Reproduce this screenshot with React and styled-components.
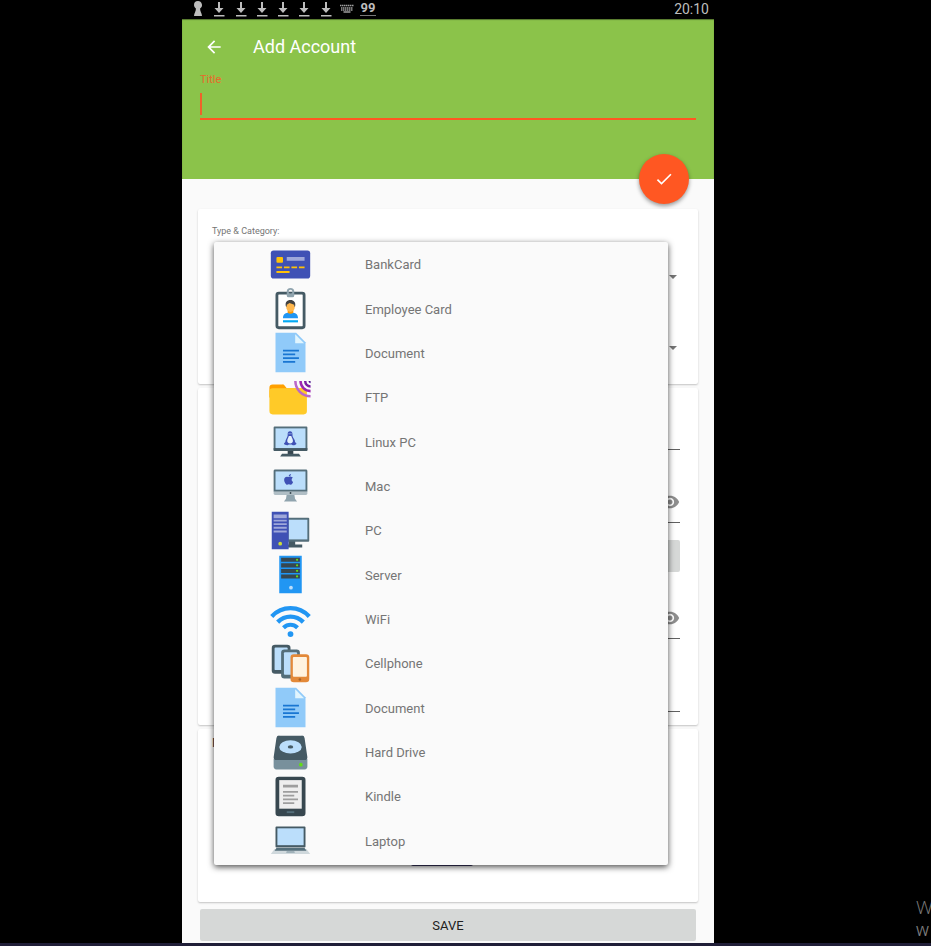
import styled, { createGlobalStyle } from "styled-components"
import { MdArrowBack, MdCheck, MdVisibility } from "react-icons/md";
import { FaApple } from "react-icons/fa";
import { useState } from "react";

const GlobalStyle = createGlobalStyle`
    * {
        box-sizing: border-box;
    }

    body {
        margin: 0;
        background-color: black;
        font-family: Roboto, "Liberation Sans", sans-serif;
    }

    button, input, select {
        font-family: inherit;
        border: none;
        border-radius: 0;
        outline: none;
        padding: 0;
        margin: 0;
    }
`

const Page = styled.div`
    min-height: 100vh;
    display: flex;
    flex-direction: column;
    overflow: hidden;
`

const Desktop = styled.div`
    flex: 1;
    display: grid;
    grid-template-columns: 182fr 532fr 217fr;
`

const Side = styled.aside`
    min-width: 0;
    display: flex;
    flex-direction: column;
    align-items: flex-end;
    justify-content: flex-end;
    padding-bottom: 3px;
`

const Watermark = styled.div`
    width: 15px;
    white-space: nowrap;
    font-family: "Open Sans", sans-serif;
    color: #7c7c7c;

    p {
        margin: 0;
        font-size: 19px;
        font-weight: 300;
        line-height: 27px;
    }

    small {
        display: block;
        font-size: 14px;
        line-height: 19px;
    }
`

const Taskbar = styled.div`
    height: 3px;
    background-color: #201e38;
`

const Phone = styled.main`
    min-width: 0;
    background-color: #fafafa;
`

const StatusBar = styled.div`
    height: 19px;
    padding: 0 5px 2px 8px;
    display: flex;
    align-items: center;
    justify-content: space-between;
    background-color: black;
    color: #bdbdbd;
    font-size: 14px;
    line-height: 16px;
`

const StatusIcons = styled.div`
    display: flex;
    align-items: center;
    justify-content: space-between;
    width: 186px;

    svg {
        width: 16px;
        height: 16px;
    }
`

const Badge = styled.span`
    width: 16px;
    text-align: center;
    font-weight: bold;
    font-size: 13px;
    line-height: 14px;
    border-bottom: 1px solid #777;
`

const Header = styled.header`
    position: relative;
    background-color: #8bc34a;
    padding: 0 18px 59px;
    box-shadow: inset 0 1px 1px rgba(0, 0, 0, 0.4);
`

const AppBar = styled.div`
    height: 54px;
    display: flex;
    align-items: center;
    gap: 29px;
    padding-top: 1px;
    color: white;
`

const BackButton = styled.button`
    width: 24px;
    height: 24px;
    margin-left: 2px;
    margin-right: -2px;
    background: none;
    color: white;
    font-size: 20px;
    display: flex;
    align-items: center;
    cursor: pointer;
    justify-content: center;
`

const Heading = styled.h1`
    margin: 0;
    font-size: 18px;
    line-height: 24px;
    font-weight: 400;
`

const TitleLabel = styled.label`
    display: block;
    font-size: 11px;
    line-height: 14px;
    color: #e8692b;
`

const TitleRow = styled.div`
    display: flex;
    margin-top: 6px;
    padding-bottom: 3px;
    border-bottom: 2px solid #ff5722;
`

const Caret = styled.span`
    width: 2px;
    height: 22px;
    background-color: #f0622a;
`

const TitleInput = styled.input`
    flex: 1;
    min-width: 0;
    height: 22px;
    background: none;
    font-size: 16px;
    color: white;
`

const Fab = styled.button`
    position: absolute;
    right: 25px;
    bottom: -25px;
    width: 50px;
    height: 50px;
    border-radius: 50%;
    display: flex;
    align-items: center;
    justify-content: center;
    background-color: #ff5722;
    color: white;
    font-size: 20px;
    box-shadow: 0 2px 4px rgba(0, 0, 0, 0.4);
    cursor: pointer;
`

const Form = styled.form`
    padding: 30px 16px 2px;
    display: flex;
    flex-direction: column;
    gap: 4px;
`

const Card = styled.section`
    position: relative;
    padding: 14px 18px 13px;
    border-radius: 2px;
    background-color: white;
    box-shadow: 0 1px 2px rgba(0, 0, 0, 0.22);
`

const TypeCard = styled(Card)`
    padding: 15px 14px 12px;
`

const NotesCard = styled(Card)`
    padding: 7px 26px 36px 14px;
`

const CardLabel = styled.div`
    font-size: 9px;
    line-height: 14px;
    color: #757575;
`

const NotesLabel = styled.div`
    font-size: 13px;
    line-height: 14px;
    color: #424242;
`

const SelectRow = styled.div`
    height: 48px;
    margin-top: ${props => props.$first ? 15 : 23}px;
    padding-right: 7px;
    display: flex;
    align-items: center;

    svg {
        width: 8px;
        height: 4px;
    }
`

const Select = styled.select`
    flex: 1;
    min-width: 0;
    height: 48px;
    appearance: none;
    background: none;
`

const Field = styled.div`
    height: 48px;
    margin-top: ${props => props.$gap || 0}px;
    padding-top: 6px;
    display: flex;
    align-items: center;
    border-bottom: 1px solid #616161;
`

const FieldInput = styled.input`
    flex: 1;
    min-width: 0;
    height: 32px;
    background: none;
`

const EyeButton = styled.button`
    width: 20px;
    height: 20px;
    background: none;
    color: #8e8e8e;
    font-size: 20px;
    display: flex;
`

const GreyButton = styled.button`
    height: 32px;
    border-radius: 2px;
    background-color: #d6d8d7;
    color: #212121;
    font-size: 13px;
    cursor: pointer;
`

const GenerateButton = styled(GreyButton)`
    display: block;
    width: 100%;
    margin: 17px 0 19px;
`

const SaveButton = styled(GreyButton)`
    margin: 3px 2px 0;
`

const ColorButton = styled.button`
    display: block;
    width: 62px;
    height: 32px;
    margin: 84px auto 0;
    border-radius: 2px;
    background-color: #3d3a66;
`

const Menu = styled.ul`
    position: absolute;
    z-index: 2;
    top: 33px;
    left: 16px;
    right: 30px;
    height: 623px;
    margin: 0;
    padding: 0 0 2px;
    list-style: none;
    display: grid;
    grid-template-rows: repeat(14, minmax(0, 1fr));
    border-radius: 2px;
    background-color: #fafafa;
    box-shadow: 0 2px 6px rgba(0, 0, 0, 0.7);
`

const MenuItem = styled.button`
    width: 100%;
    height: 100%;
    padding-left: 54px;
    display: flex;
    align-items: center;
    gap: 52px;
    background: none;
    color: #757575;
    font-size: 13px;
    line-height: 16px;
    text-align: left;
    cursor: pointer;

    > svg {
        flex: none;
        width: 45px;
        height: 45px;
    }
`

const ItemName = styled.span`
    padding-top: 2px;
`

const Icon = ({ children }) => <svg viewBox="0 0 48 48" aria-hidden="true">{children}</svg>

const BankCardIcon = () => (
    <Icon>
        <rect x="3" y="9" width="42" height="30" rx="3" fill="#3F51B5" />
        <rect x="9" y="16" width="7" height="6" rx="1" fill="#FFC107" />
        <rect x="20" y="16" width="19" height="4" fill="#9FA8DA" />
        <path d="M9 26h6v2H9zM17 26h6v2h-6zM25 26h6v2h-6zM33 26h6v2h-6zM9 31h14v2H9z" fill="#FFC107" />
    </Icon>
)

const EmployeeIcon = () => (
    <Icon>
        <rect x="9.5" y="7.5" width="29" height="37" rx="2" fill="white" stroke="#455A64" strokeWidth="3" />
        <path d="M24 2a4 4 0 0 0-4 4v4a2 2 0 0 0 2 2h4a2 2 0 0 0 2-2V6a4 4 0 0 0-4-4zm0 6a2 2 0 1 1 0-4 2 2 0 0 1 0 4z" fill="#90A4AE" />
        <path d="M21 25h6v5l-3 1-3-1z" fill="#FF9800" />
        <ellipse cx="24" cy="22" rx="4.6" ry="5.6" fill="#FFB74D" />
        <path d="M19 21.5c-.8-4 1-6.5 5-6.5 3.5 0 5.8 2.5 5 6.5l-1 .5v-2l-5-1.8-3 1.8v2z" fill="#424242" />
        <path d="M16 34.5c0-4 2-5.5 5-6 1.5 1.500 4.5 1.500 6 0 3 .5 5 2 5 6z" fill="#2196F3" />
        <path d="M16 36.5h16v2.300H16z" fill="#03A9F4" />
    </Icon>
)

const DocumentIcon = () => (
    <Icon>
        <path d="M40 45H8V3h22l10 10z" fill="#90CAF9" />
        <path d="M38.500 14H29V4.500z" fill="#E1F5FE" />
        <path d="M16 21h17v2H16zM16 25h13v2H16zM16 29h17v2H16zM16 33h13v2H16z" fill="#1976D2" />
    </Icon>
)

const FtpIcon = () => (
    <Icon>
        <path d="M38 14H20l-3-3.500a2 2 0 0 0-1.500-.5H5a3.500 3.500 0 0 0-3.500 3.500V24H41z" fill="#FFA000" />
        <rect x="1.500" y="14" width="40" height="28" rx="3.500" fill="#FFCA28" />
        <g fill="none" strokeWidth="2.700">
            <path d="M29.200 6.500A16.200 16.200 0 0 0 45.400 22.700" stroke="#BA68C8" />
            <path d="M34.700 6.500A10.700 10.700 0 0 0 45.400 17.200" stroke="#9C27B0" />
            <path d="M39.700 6.500A5.700 5.700 0 0 0 45.400 12.200" stroke="#7B1FA2" />
        </g>
        <path d="M43.200 6.500a2.200 2.200 0 0 0 2.200 2.200V6.500z" fill="#4A148C" />
    </Icon>
)

const LinuxIcon = () => (
    <Icon>
        <path d="M21 33h6v5h-6z" fill="#37474F" />
        <path d="M15 37h18l2 3H13z" fill="#455A64" />
        <rect x="6" y="8" width="36" height="26" rx="1" fill="#546E7A" />
        <path d="M6 31h36v2a1 1 0 0 1-1 1H7a1 1 0 0 1-1-1z" fill="#455A64" />
        <path d="M8 10h32v21H8z" fill="#BBDEFB" />
        <path d="M23.500 13c-2 0-2.700 1.400-2.500 3.500.2 2-.7 3-1.700 5-.6 1.200-.8 2.300-.8 3l-1.500 1.700c0 1.200 2.500 2 4 1.800l1.200-.8h3l1.200.8c1.500.2 4-.8 4-2l-1.600-1.500c.1-1-.3-2-1-3.200-1.300-2-1.800-3-1.700-4.800.1-2.100-.6-3.500-2.600-3.500z" fill="#3F51B5" />
        <path d="M23.500 18l1.300.1c.5 2 1.900 3.300 1.800 5.300-.1 1.500-1.300 2.600-3 2.600s-3-1.100-3.100-2.600c-.1-2 1.300-3.400 1.700-5.300z" fill="#E3F2FD" />
        <path d="M22 15.200h1v1h-1zM24 15.200h1v1h-1z" fill="#BBDEFB" />
    </Icon>
)

const MacIcon = () => (
    <Icon>
        <path d="M20 33h8l.8 5 2.200 3H17l2.200-3z" fill="#90A4AE" />
        <path d="M6 30h36v2.500a1.500 1.500 0 0 1-1.500 1.500h-33A1.500 1.500 0 0 1 6 32.500z" fill="#B0BEC5" />
        <path d="M7.500 7h33A1.500 1.500 0 0 1 42 8.500V30.500H6V8.500A1.500 1.500 0 0 1 7.500 7z" fill="#546E7A" />
        <path d="M8 9h32v19.500H8z" fill="#BBDEFB" />
        <circle cx="24" cy="32" r="1" fill="#37474F" />
        <FaApple x="15.500" y="11" width="15.500" height="15.500" color="#3F51B5" />
    </Icon>
)

const PcIcon = () => (
    <Icon>
        <path d="M22 35h7v4h7.500v3H20v-3h2z" fill="#455A64" />
        <rect x="18" y="10.500" width="26" height="25.500" rx="1" fill="#546E7A" />
        <path d="M22 12.500h20v21H22z" fill="#BBDEFB" />
        <path d="M4 4h18v40H4z" fill="#3F51B5" />
        <path d="M6 7h14v4H6zM6 12.500h14v2H6zM6 16.200h14v2H6zM6 20h14v2H6zM6 24h14v2H6z" fill="#9FA8DA" />
        <circle cx="13" cy="38" r="2" fill="#CDDC39" />
    </Icon>
)

const ServerIcon = () => (
    <Icon>
        <path d="M12 4h24v40H12z" fill="#2196F3" />
        <path d="M14 6.200h20v4.300H14zM14 12.100h20v4.300H14zM14 18h20v4.300H14zM14 23.900h20v4.300H14z" fill="#37474F" />
        <g fill="#64DD17">
            <circle cx="31" cy="8.300" r="1.200" />
            <circle cx="31" cy="14.200" r="1.200" />
            <circle cx="31" cy="20.100" r="1.200" />
            <circle cx="31" cy="26" r="1.200" />
        </g>
        <circle cx="24.500" cy="38" r="2" fill="#BBDEFB" />
    </Icon>
)

const WifiIcon = () => (
    <Icon>
        <g fill="none" stroke="#2196F3" strokeWidth="4.600">
            <path d="M4 20.800C15 9 33 9 44 20.800" />
            <path d="M10.300 26.800C18 19 30 19 37.700 26.800" />
            <path d="M16.500 32.800C21 28.800 27 28.800 31.500 32.800" />
        </g>
        <circle cx="24" cy="39.500" r="3.100" fill="#2196F3" />
    </Icon>
)

const CellphoneIcon = () => (
    <Icon>
        <rect x="4" y="4" width="20" height="31" rx="3.500" fill="#455A64" />
        <rect x="7" y="7" width="14" height="24" rx="1" fill="#BBDEFB" />
        <rect x="14" y="9" width="20" height="31" rx="3.500" fill="#546E7A" />
        <rect x="17" y="12" width="14" height="24" rx="1" fill="#BBDEFB" />
        <rect x="24" y="14" width="20" height="30" rx="3.500" fill="#E38939" />
        <rect x="26.500" y="17" width="15" height="21" rx="1" fill="#FFF3E0" />
        <circle cx="34" cy="41" r="1.400" fill="#A6642A" />
    </Icon>
)

const HardDriveIcon = () => (
    <Icon>
        <path d="M6 31h36v8a3 3 0 0 1-3 3H9a3 3 0 0 1-3-3z" fill="#78909C" />
        <path d="M12 6h24a3 3 0 0 1 3 2.500L42 29a3 3 0 0 1-3 3H9a3 3 0 0 1-3-3L9 8.500A3 3 0 0 1 12 6z" fill="#455A64" />
        <ellipse cx="24" cy="18" rx="12" ry="7" fill="#BBDEFB" />
        <ellipse cx="24" cy="18" rx="2.900" ry="1.800" fill="#455A64" />
        <circle cx="35" cy="37" r="2" fill="#64DD17" />
    </Icon>
)

const KindleIcon = () => (
    <Icon>
        <rect x="8" y="3" width="32" height="42" rx="3.500" fill="#37474F" />
        <path d="M12 6.500h24V37H12z" fill="#EEEEEE" />
        <path d="M16 11.500h16v3H16zM16 18h16v2H16zM16 22h12v2H16zM16 26h16v2H16zM16 30h12v2H16z" fill="#9E9E9E" />
        <rect x="20" y="39.700" width="8" height="2" fill="#546E7A" />
    </Icon>
)

const LaptopIcon = () => (
    <Icon>
        <path d="M7 33h34l4 5.500H3z" fill="#CFD8DC" />
        <path d="M9 32h30l2 3H7z" fill="#546E7A" />
        <rect x="8" y="9" width="32" height="22.500" rx="1" fill="#455A64" />
        <path d="M10 11h28v18H10z" fill="#BBDEFB" />
        <path d="M20 35.500h8l.7 1.500h-9.400z" fill="#90A4AE" />
    </Icon>
)

const types = [
    { name: "BankCard", icon: BankCardIcon },
    { name: "Employee Card", icon: EmployeeIcon },
    { name: "Document", icon: DocumentIcon },
    { name: "FTP", icon: FtpIcon },
    { name: "Linux PC", icon: LinuxIcon },
    { name: "Mac", icon: MacIcon },
    { name: "PC", icon: PcIcon },
    { name: "Server", icon: ServerIcon },
    { name: "WiFi", icon: WifiIcon },
    { name: "Cellphone", icon: CellphoneIcon },
    { name: "Document", icon: DocumentIcon },
    { name: "Hard Drive", icon: HardDriveIcon },
    { name: "Kindle", icon: KindleIcon },
    { name: "Laptop", icon: LaptopIcon },
]

const DownloadIcon = () => (
    <svg viewBox="0 0 16 16" fill="#bdbdbd" aria-hidden="true">
        <path d="M7 1h2v6h3.500L8 12 3.500 7H7zM3 14h10.500v1.500H3z" />
    </svg>
)

const KeyholeIcon = () => (
    <svg viewBox="0 0 16 16" fill="#bdbdbd" aria-hidden="true">
        <path d="M8 0a4 4 0 0 0-4 4c0 1.500.8 2.700 1.900 3.400C6.200 10 4 12 4 15h8c0-3-2.200-5-1.900-7.600A4 4 0 0 0 8 0z" />
    </svg>
)

const KeyboardIcon = () => (
    <svg viewBox="0 0 16 16" fill="none" stroke="#9e9e9e" strokeWidth="1.500" aria-hidden="true">
        <path d="M1 4.500h14M2 7h12" strokeDasharray="1.500 .5" />
        <path d="M2 9h12" strokeDasharray="1.500 .5" />
        <path d="M4.500 11h7" />
    </svg>
)

const DropArrow = () => (
    <svg viewBox="0 0 8 4" fill="#757575" aria-hidden="true">
        <path d="M0 0h8L4 4z" />
    </svg>
)

function App() {

    const [title, setTitle] = useState("")
    const [open, setOpen] = useState(true)

    return (
        <Page>
            <GlobalStyle />
            <Desktop>
                <Side />

                <Phone>
                    <StatusBar>
                        <StatusIcons>
                            <KeyholeIcon />
                            {[1, 2, 3, 4, 5, 6].map(n => <DownloadIcon key={n} />)}
                            <KeyboardIcon />
                            <Badge>99</Badge>
                        </StatusIcons>
                        <span>20:10</span>
                    </StatusBar>

                    <Header>
                        <AppBar>
                            <BackButton aria-label="Back"><MdArrowBack /></BackButton>
                            <Heading>Add Account</Heading>
                        </AppBar>
                        <TitleLabel htmlFor="title">Title</TitleLabel>
                        <TitleRow>
                            <Caret />
                            <TitleInput id="title" value={title} onChange={(e) => setTitle(e.target.value)} />
                        </TitleRow>
                        <Fab aria-label="Confirm"><MdCheck /></Fab>
                    </Header>

                    <Form onSubmit={(e) => e.preventDefault()}>
                        <TypeCard style={{ zIndex: open ? 1 : 0 }}>
                            <CardLabel>Type &amp; Category:</CardLabel>
                            <SelectRow $first>
                                <Select aria-label="Type" />
                                <DropArrow />
                            </SelectRow>
                            <SelectRow>
                                <Select aria-label="Category" />
                                <DropArrow />
                            </SelectRow>
                            {open && (
                                <Menu>
                                    {types.map(({ name, icon: TypeIcon }, i) => (
                                        <li key={i}>
                                            <MenuItem type="button" onClick={() => setOpen(false)}>
                                                <TypeIcon />
                                                <ItemName>{name}</ItemName>
                                            </MenuItem>
                                        </li>
                                    ))}
                                </Menu>
                            )}
                        </TypeCard>

                        <Card>
                            <Field>
                                <FieldInput aria-label="Username" />
                            </Field>
                            <Field $gap={25}>
                                <FieldInput type="password" aria-label="Password" />
                                <EyeButton type="button" aria-label="Show password"><MdVisibility /></EyeButton>
                            </Field>
                            <GenerateButton type="button" aria-label="Generate password" />
                            <Field>
                                <FieldInput type="password" aria-label="Repeat password" />
                                <EyeButton type="button" aria-label="Show repeated password"><MdVisibility /></EyeButton>
                            </Field>
                            <Field $gap={25}>
                                <FieldInput aria-label="Website" />
                            </Field>
                        </Card>

                        <NotesCard>
                            <NotesLabel>Notes</NotesLabel>
                            <ColorButton type="button" aria-label="Pick color" />
                        </NotesCard>

                        <SaveButton type="submit">SAVE</SaveButton>
                    </Form>
                </Phone>

                <Side>
                    <Watermark>
                        <p>W</p>
                        <small>W</small>
                    </Watermark>
                </Side>
            </Desktop>
            <Taskbar />
        </Page>
    )
}

export default App
